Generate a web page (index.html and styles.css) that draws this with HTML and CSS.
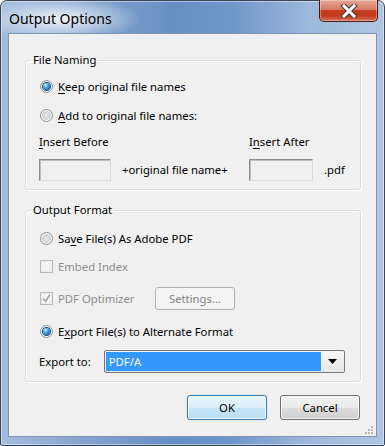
FILE: index.html
```html
<!DOCTYPE html>
<html lang="en">
<head>
    <meta charset="UTF-8">
    <title>Output Options</title>
    <link rel="stylesheet" href="styles.css">
</head>
<body>
    <div class="window">
        <div class="titlebar">
            <span class="title">Output Options</span>
            <button class="close" aria-label="Close">
                <svg width="18" height="14" viewBox="0 0 18 14">
                    <path d="M4 2 L14 12 M14 2 L4 12" stroke="#3b3b3b" stroke-width="5" stroke-linecap="square" fill="none"/>
                    <path d="M4 2 L14 12 M14 2 L4 12" stroke="#ffffff" stroke-width="3" stroke-linecap="square" fill="none"/>
                </svg>
            </button>
        </div>

        <div class="client">
            <fieldset class="group">
                <legend>File Naming</legend>
                <div class="group-body">
                    <div class="option row-29"><span class="radio checked"></span><span><u>K</u>eep original file names</span></div>
                    <div class="option row-29"><span class="radio"></span><span><u>A</u>dd to original file names:</span></div>
                    <div class="affix">
                        <span class="affix-label"><u>I</u>nsert Before</span>
                        <span></span>
                        <span class="affix-label">I<u>n</u>sert After</span>
                        <span></span>
                        <input class="field field-before" type="text">
                        <span class="affix-text mid">+original file name+</span>
                        <input class="field field-after" type="text">
                        <span class="affix-text ext">.pdf</span>
                    </div>
                </div>
            </fieldset>

            <fieldset class="group group-output">
                <legend>Output Format</legend>
                <div class="group-body">
                    <div class="option row-save"><span class="radio"></span><span>Sa<u>v</u>e File(s) As Adobe PDF</span></div>
                    <div class="option row-embed disabled"><span class="check"></span><span>Embed Index</span></div>
                    <div class="option row-optim disabled">
                        <span class="check checked">
                            <svg width="11" height="11" viewBox="0 0 11 11"><path d="M2 5.5 L4.5 8.5 L9 1.5" stroke="#a3a3a3" stroke-width="1.6" fill="none"/></svg>
                        </span>
                        <span class="optim-text">PDF Optimizer</span>
                        <button class="btn btn-disabled settings">Settings...</button>
                    </div>
                    <div class="option row-export"><span class="radio checked"></span><span>E<u>x</u>port File(s) to Alternate Format</span></div>
                    <div class="export-row">
                        <span class="export-label">Export to:</span>
                        <div class="combo">
                            <span class="combo-value">PDF/A</span>
                            <span class="combo-arrow">
                                <svg width="9" height="5" viewBox="0 0 9 5"><path d="M0 0 H9 L4.5 5 Z" fill="#000"/></svg>
                            </span>
                        </div>
                    </div>
                </div>
            </fieldset>

            <div class="actions">
                <button class="btn btn-default">OK</button>
                <button class="btn">Cancel</button>
            </div>

            <div class="grip">
                <svg width="8" height="8" viewBox="0 0 8 8">
                    <g fill="#b8b8b8">
                        <rect x="6" y="0" width="2" height="2"/>
                        <rect x="3" y="3" width="2" height="2"/>
                        <rect x="6" y="3" width="2" height="2"/>
                        <rect x="0" y="6" width="2" height="2"/>
                        <rect x="3" y="6" width="2" height="2"/>
                        <rect x="6" y="6" width="2" height="2"/>
                    </g>
                </svg>
            </div>
        </div>
    </div>
</body>
</html>
```

FILE: styles.css
```css
* {
    box-sizing: border-box;
}
html, body {
    margin: 0;
    padding: 0;
    background: #ffffff;
}
body {
    font-family: "Segoe UI", "Noto Sans", sans-serif;
    font-size: 11.3px;
    color: #000;
}
u {
    text-decoration: underline;
    text-underline-offset: 2px;
}

/* window frame */
.window {
    width: 385px;
    height: 446px;
    display: flex;
    flex-direction: column;
    border: 1px solid #3a4658;
    border-radius: 7px 7px 2px 2px;
    background:
        radial-gradient(ellipse 80px 22px at 60px 18px, rgba(255,255,255,0.85), rgba(255,255,255,0) 100%),
        linear-gradient(to right, #a4bddc 0%, #86a6cf 20%, #668fc2 45%, #6f96c8 60%, #9cb8db 80%, #afc6e2 100%);
    box-shadow: inset 0 0 0 1px rgba(255,255,255,0.45);
}
.titlebar {
    height: 32px;
    display: flex;
    justify-content: space-between;
    align-items: flex-start;
    padding-left: 8px;
}
.title {
    font-size: 14px;
    line-height: 20px;
    padding-top: 8px;
    color: #000;
}
.close {
    width: 59px;
    height: 22px;
    margin: -1px 6px 0 0;
    padding: 0;
    display: flex;
    align-items: center;
    justify-content: center;
    border: 1px solid #4b1a13;
    border-top: none;
    border-radius: 0 0 5px 5px;
    background: linear-gradient(#e6a695 0%, #d77a66 45%, #c53e24 50%, #c4381c 75%, #dc7258 100%);
    box-shadow: inset 0 0 0 1px rgba(255,255,255,0.35);
}

.client {
    flex: 1;
    display: flex;
    flex-direction: column;
    margin: 0 7px 8px 7px;
    padding: 18px 15px 0 16px;
    background: #f0f0f0;
    border: 1px solid #7f93b0;
}

/* group boxes */
.group {
    margin: 0;
    padding: 0;
    min-inline-size: 0;
    border: 1px solid #d5dfe5;
    border-radius: 3px;
    box-shadow: inset 1px 1px 0 #ffffff, 1px 1px 0 #ffffff;
}
.group legend {
    margin-left: 5px;
    padding: 0 2px;
    line-height: 16px;
}
.group-output {
    margin-top: 12px;
}
.group-body {
    padding: 4px 15px 8px 13px;
}

.option {
    display: flex;
    align-items: center;
    gap: 5px;
    white-space: nowrap;
}
.row-29 { height: 29px; }
.row-save { height: 32px; }
.row-embed { height: 24px; }
.row-optim { height: 40px; }
.row-export { height: 26px; }
.disabled {
    color: #8d8d8d;
}

/* radio buttons */
.radio {
    width: 13px;
    height: 13px;
    margin-left: 1px;
    border-radius: 50%;
    border: 1px solid #8f9193;
    background: radial-gradient(circle at 50% 50%, #e8e8e8 0%, #cfd1d3 55%, #f4f4f4 56%, #fbfbfb 100%);
    display: flex;
    align-items: center;
    justify-content: center;
    flex: none;
}
.radio.checked::after {
    content: "";
    width: 7px;
    height: 7px;
    border-radius: 50%;
    background: radial-gradient(circle at 35% 30%, #c4ecff 0%, #3c9ad4 45%, #0c4a86 100%);
    box-shadow: 0 0 0 1px #1b4e80;
}

/* check boxes */
.check {
    width: 13px;
    height: 13px;
    margin-left: 1px;
    border: 1px solid #b7b7b7;
    background: #f4f4f4;
    box-shadow: inset 0 0 0 1px #ebebeb;
    display: flex;
    align-items: center;
    justify-content: center;
    flex: none;
}
.optim-text {
    width: 92px;
}

/* file name affix grid */
.affix {
    display: grid;
    grid-template-columns: 72px 138px 64px auto;
    grid-template-rows: 16px 22px;
    row-gap: 9px;
    margin-top: 4px;
    white-space: nowrap;
    line-height: 16px;
}
.field {
    width: 100%;
    height: 22px;
    margin: 0;
    background: #f0f0f0;
    border: 1px solid;
    border-color: #8d8d8d #dadada #dadada #8d8d8d;
    box-shadow: inset 1px 1px 0 #bdbdbd;
}
.affix-text {
    align-self: center;
    padding-left: 11px;
}

/* buttons */
.btn {
    font-family: inherit;
    font-size: 11.3px;
    color: #000;
    height: 24px;
    padding: 0;
    border: 1px solid #707070;
    border-radius: 3px;
    background: linear-gradient(#f2f2f2 0%, #ebebeb 50%, #dddddd 51%, #cfcfcf 100%);
    box-shadow: inset 0 0 0 1px rgba(255,255,255,0.7);
}
.btn-default {
    border-color: #3c7fb1;
    background: linear-gradient(#e8f5fc 0%, #daeffa 50%, #c6e6f7 51%, #b7def4 100%);
    box-shadow: inset 0 0 0 1px rgba(255,255,255,0.8), 0 0 1px #62a9df;
}
.btn-disabled {
    color: #838383;
    border-color: #adb2b5;
    background: #f4f4f4;
    box-shadow: none;
}
.settings {
    width: 80px;
    height: 23px;
}

/* export combo */
.export-row {
    display: flex;
    align-items: center;
    margin-top: 6px;
}
.export-label {
    width: 65px;
}
.combo {
    width: 242px;
    height: 23px;
    display: flex;
    padding: 1px;
    border: 1px solid #7a7a7a;
    border-radius: 2px;
    background: linear-gradient(#f6f6f6, #e6e6e6);
}
.combo-value {
    flex: 1;
    background: #3399ff;
    color: #ffffff;
    padding-left: 3px;
    line-height: 19px;
}
.combo-arrow {
    width: 22px;
    display: flex;
    align-items: center;
    justify-content: center;
}

.actions {
    display: flex;
    justify-content: flex-end;
    gap: 13px;
    margin-top: 13px;
    padding-right: 1px;
}
.actions .btn {
    width: 80px;
    height: 25px;
}

.grip {
    display: flex;
    justify-content: flex-end;
    margin-top: auto;
    margin-right: -12px;
    padding-bottom: 2px;
}
```
